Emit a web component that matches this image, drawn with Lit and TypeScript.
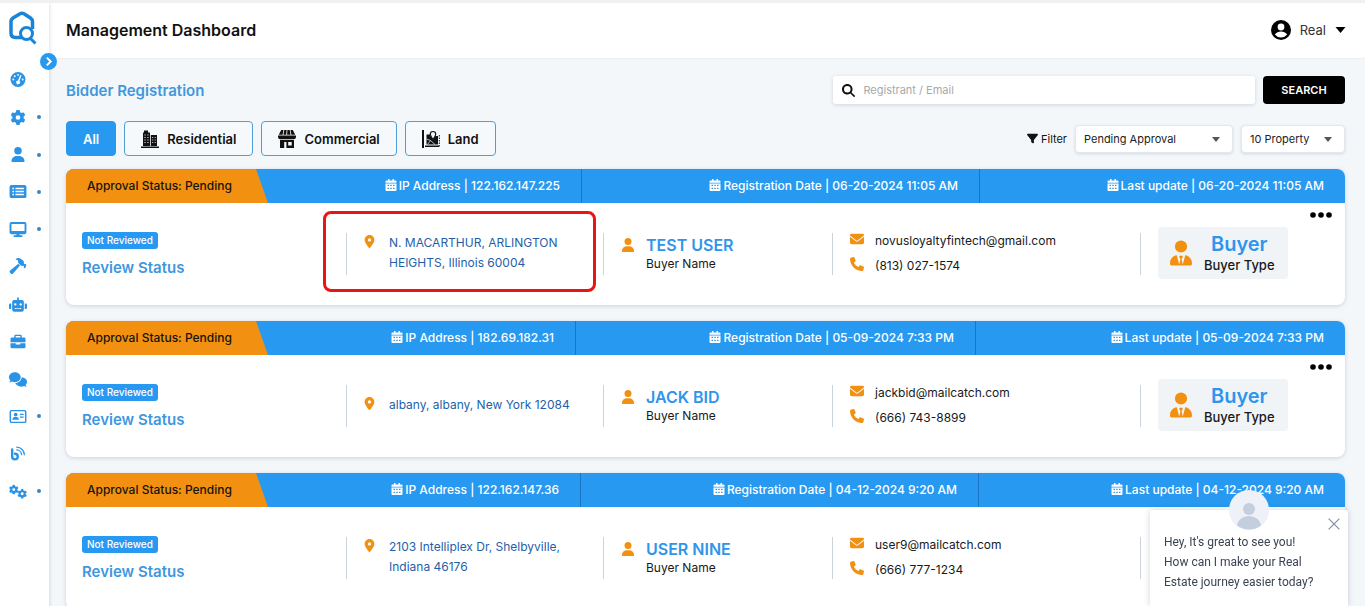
import { LitElement, html, css, svg, TemplateResult } from "lit";
import { customElement, property, state } from "lit/decorators.js";
import { styleMap } from "lit/directives/style-map.js";
import { classMap } from "lit/directives/class-map.js";

const GEAR =
  "M495.9 166.6c3.2 8.7 .5 18.4-6.4 24.6l-43.3 39.4c1.1 8.3 1.7 16.8 1.7 25.4s-.6 17.1-1.7 25.4l43.3 39.4c6.9 6.2 9.6 15.9 6.4 24.6c-4.4 11.9-9.7 23.3-15.8 34.3l-4.7 8.1c-6.6 11-14 21.4-22.1 31.2c-5.9 7.2-15.7 9.6-24.5 6.8l-55.7-17.7c-13.4 10.3-28.2 18.9-44 25.4l-12.5 57.1c-2 9.1-9 16.3-18.2 17.8c-13.8 2.3-28 3.5-42.5 3.5s-28.7-1.2-42.5-3.5c-9.2-1.5-16.2-8.7-18.2-17.8l-12.5-57.1c-15.8-6.5-30.6-15.1-44-25.4L83.1 425.9c-8.8 2.8-18.6 .3-24.5-6.8c-8.1-9.8-15.5-20.2-22.1-31.2l-4.7-8.1c-6.1-11-11.4-22.4-15.8-34.3c-3.2-8.7-.5-18.4 6.4-24.6l43.3-39.4C64.6 273.1 64 264.6 64 256s.6-17.1 1.7-25.4L22.4 191.2c-6.9-6.2-9.6-15.9-6.4-24.6c4.4-11.9 9.7-23.3 15.8-34.3l4.7-8.1c6.6-11 14-21.4 22.1-31.2c5.9-7.2 15.7-9.6 24.5-6.8l55.7 17.7c13.4-10.3 28.2-18.9 44-25.4l12.5-57.1c2-9.1 9-16.3 18.2-17.8C227.3 1.2 241.5 0 256 0s28.7 1.2 42.5 3.5c9.2 1.5 16.2 8.7 18.2 17.8l12.5 57.1c15.8 6.5 30.6 15.1 44 25.4l55.7-17.7c8.8-2.8 18.6-.3 24.5 6.8c8.1 9.8 15.5 20.2 22.1 31.2l4.7 8.1c6.1 11 11.4 22.4 15.8 34.3zM256 336a80 80 0 1 0 0-160 80 80 0 1 0 0 160z";

interface Glyph {
  box: string;
  art: TemplateResult;
}

const glyphs: Record<string, Glyph> = {
  gauge: {
    box: "0 0 512 512",
    art: svg`<path fill-rule="evenodd" d="M256 0a256 256 0 1 1 0 512 256 256 0 1 1 0-512zM256 64a32 32 0 1 0 0 64 32 32 0 1 0 0-64zM144 112a32 32 0 1 0 0 64 32 32 0 1 0 0-64zM96 224a32 32 0 1 0 0 64 32 32 0 1 0 0-64zM416 224a32 32 0 1 0 0 64 32 32 0 1 0 0-64zM325 118l-66 172a64 64 0 1 0 45 17l66-172a24 24 0 0 0-45-17z"/>`,
  },
  gear: { box: "0 0 512 512", art: svg`<path d=${GEAR} />` },
  gears: {
    box: "0 0 640 512",
    art: svg`<g transform="translate(0 20) scale(.66)"><path d=${GEAR} /></g><g transform="translate(300 170) scale(.66)"><path d=${GEAR} /></g>`,
  },
  user: {
    box: "0 0 448 512",
    art: svg`<path d="M224 256a128 128 0 1 0 0-256 128 128 0 1 0 0 256zm-45.7 48C79.8 304 0 383.8 0 482.3 0 498.7 13.3 512 29.7 512h388.6c16.4 0 29.7-13.3 29.7-29.7C448 383.8 368.2 304 269.7 304h-91.4z"/>`,
  },
  list: {
    box: "0 0 576 512",
    art: svg`<path fill-rule="evenodd" d="M64 32h448a64 64 0 0 1 64 64v320a64 64 0 0 1-64 64H64a64 64 0 0 1-64-64V96a64 64 0 0 1 64-64zM96 128v52h56v-52zM96 230v52h56v-52zM96 332v52h56v-52zM200 132v44h288v-44zM200 234v44h288v-44zM200 336v44h288v-44z"/>`,
  },
  desktop: {
    box: "0 0 576 512",
    art: svg`<path d="M64 0C28.7 0 0 28.7 0 64L0 352c0 35.3 28.7 64 64 64l176 0-10.7 32L160 448c-17.7 0-32 14.3-32 32s14.3 32 32 32l256 0c17.7 0 32-14.3 32-32s-14.3-32-32-32l-69.3 0L336 416l176 0c35.3 0 64-28.7 64-64l0-288c0-35.3-28.7-64-64-64L64 0zM512 64l0 240L64 304 64 64l448 0z"/>`,
  },
  hammer: {
    box: "0 0 576 512",
    art: svg`<path d="M571 194l-23-23a16 16 0 0 0-22 0l-12 11-28-28c11-34 3-73-24-99L401 5c-56-56-146-56-202 0l90 45v40c0 25 10 49 28 67l57 53c26 26 64 34 98 23l29 29-12 11a16 16 0 0 0 0 23l23 23a16 16 0 0 0 22 0l38-103a16 16 0 0 0-1-22z"/><path d="M300 160L20 392c-25 23-26 53-2 77l25 25c24 24 53 23 77-2l235-273z"/>`,
  },
  robot: {
    box: "0 0 640 512",
    art: svg`<path fill-rule="evenodd" d="M320 0a32 32 0 0 1 32 32v64h104a72 72 0 0 1 72 72v272a72 72 0 0 1-72 72H184a72 72 0 0 1-72-72V168a72 72 0 0 1 72-72h104V32a32 32 0 0 1 32-32zM208 384v32h64v-32zM296 384v32h48v-32zM368 384v32h64v-32zM224 208a42 42 0 1 0 0 84 42 42 0 1 0 0-84zM416 208a42 42 0 1 0 0 84 42 42 0 1 0 0-84zM48 224h32v192H48a48 48 0 0 1-48-48v-96a48 48 0 0 1 48-48zM592 224h-32v192h32a48 48 0 0 0 48-48v-96a48 48 0 0 0-48-48z"/>`,
  },
  briefcase: {
    box: "0 0 512 512",
    art: svg`<path fill-rule="evenodd" d="M176 24h160a48 48 0 0 1 48 48v48h80a48 48 0 0 1 48 48v112H0V168a48 48 0 0 1 48-48h80V72a48 48 0 0 1 48-48zM176 72v48h160V72zM0 316h180v40h152v-40h180v126a48 48 0 0 1-48 48H48a48 48 0 0 1-48-48z"/>`,
  },
  comments: {
    box: "0 0 640 512",
    art: svg`<path d="M416 176c0 97-93 176-208 176-38 0-74-9-105-24-29 21-62 30-95 30 22-25 36-50 40-72C18 256 0 218 0 176 0 79 93 0 208 0s208 79 208 176z"/><path d="M448 178c0 114-104 202-226 206 38 76 118 128 210 128 38 0 74-9 105-24 29 17 62 24 95 24-20-24-36-45-40-67 30-30 48-69 48-109 0-82-80-154-193-160z"/>`,
  },
  card: {
    box: "0 0 576 512",
    art: svg`<path fill-rule="evenodd" d="M64 32h448a64 64 0 0 1 64 64v320a64 64 0 0 1-64 64H64a64 64 0 0 1-64-64V96a64 64 0 0 1 64-64zM48 96v320a16 16 0 0 0 16 16h448a16 16 0 0 0 16-16V96a16 16 0 0 0-16-16H64a16 16 0 0 0-16 16z"/><circle cx="208" cy="190" r="64"/><path d="M96 368c0-52 36-92 84-92h56c48 0 84 40 84 92zM352 160h128v44H352zM352 256h128v44H352z"/>`,
  },
  blog: {
    box: "0 0 512 512",
    art: svg`<path fill="none" stroke="currentColor" stroke-width="80" stroke-linecap="round" d="M56 120v240a96 96 0 1 0 96-96"/><path fill="none" stroke="currentColor" stroke-width="44" stroke-linecap="round" d="M216 40c140 4 252 116 256 256M216 134c88 4 158 74 162 162"/>`,
  },
  search: {
    box: "0 0 512 512",
    art: svg`<path d="M416 208c0 45.9-14.9 88.3-40 122.7L502.6 457.4c12.5 12.5 12.5 32.8 0 45.3s-32.8 12.5-45.3 0L330.7 376c-34.4 25.2-76.8 40-122.7 40C93.1 416 0 322.9 0 208S93.1 0 208 0S416 93.1 416 208zM208 336a128 128 0 1 0 0-256 128 128 0 1 0 0 256z"/>`,
  },
  filter: {
    box: "0 0 512 512",
    art: svg`<path d="M3.9 54.9C10.5 40.9 24.5 32 40 32l432 0c15.5 0 29.5 8.9 36.1 22.9s4.6 30.5-5.2 42.5L320 320.9 320 448c0 12.1-6.8 23.2-17.7 28.6s-23.8 4.3-33.5-3l-64-48c-8.1-6-12.8-15.5-12.8-25.6l0-79.1L9 97.3C-.7 85.4-2.8 68.8 3.9 54.9z"/>`,
  },
  pin: {
    box: "0 0 384 512",
    art: svg`<path d="M215.7 499.2C267 435 384 279.4 384 192C384 86 298 0 192 0S0 86 0 192c0 87.4 117 243 168.3 307.2c12.3 15.3 35.1 15.3 47.4 0zM192 128a64 64 0 1 1 0 128 64 64 0 1 1 0-128z"/>`,
  },
  envelope: {
    box: "0 0 512 512",
    art: svg`<path d="M48 64C21.5 64 0 85.5 0 112c0 15.1 7.1 29.3 19.2 38.4L236.8 313.6c11.4 8.5 27 8.5 38.4 0L492.8 150.4c12.1-9.1 19.2-23.3 19.2-38.4c0-26.5-21.5-48-48-48L48 64zM0 176L0 384c0 35.3 28.7 64 64 64l384 0c35.3 0 64-28.7 64-64l0-208L294.4 339.2c-22.8 17.1-54 17.1-76.8 0L0 176z"/>`,
  },
  phone: {
    box: "0 0 512 512",
    art: svg`<path d="M164.9 24.6c-7.7-18.6-28-28.5-47.4-23.2l-88 24C12.1 30.2 0 46 0 64C0 311.4 200.6 512 448 512c18 0 33.8-12.1 38.6-29.5l24-88c5.3-19.4-4.6-39.7-23.2-47.4l-96-40c-16.3-6.8-35.2-2.1-46.3 11.6L304.7 368C234.3 334.7 177.3 277.7 144 207.3L193.3 167c13.7-11.2 18.4-30 11.6-46.3l-40-96z"/>`,
  },
  calendar: {
    box: "0 0 24 24",
    art: svg`<path fill-rule="evenodd" d="M6 0h3v3h6V0h3v3h3a2 2 0 0 1 2 2v2.500H1V5a2 2 0 0 1 2-2h3zM1 9h22v13a2 2 0 0 1-2 2H3a2 2 0 0 1-2-2zM5 11.500v2.500h3v-2.500zM10.500 11.500v2.500h3v-2.500zM16 11.500v2.500h3v-2.500zM5 17.500v2.500h3v-2.500zM10.500 17.500v2.500h3v-2.500zM16 17.500v2.500h3v-2.500z"/>`,
  },
  tie: {
    box: "0 0 448 512",
    art: svg`<circle cx="224" cy="124" r="124"/><path d="M138 302C58 312 0 380 0 460v22c0 17 13 30 30 30h388c17 0 30-13 30-30v-22c0-80-58-148-138-158l-50 186-24-104 24-46c6-11-2-24-14-24h-44c-12 0-20 13-14 24l24 46-24 104z"/>`,
  },
  account: {
    box: "0 0 20 20",
    art: svg`<circle cx="10" cy="10" r="10"/><circle cx="10" cy="7" r="3.400" fill="#fff"/><path fill="#fff" d="M3.800 14.600c1.500-2 3.600-3.200 6.200-3.200s4.700 1.200 6.200 3.200A8 8 0 0 1 10 17.600a8 8 0 0 1-6.200-3z"/>`,
  },
  caret: { box: "0 0 10 6", art: svg`<path d="M0 0h10L5 6z"/>` },
  chevron: {
    box: "0 0 10 10",
    art: svg`<path d="M3.500 1.500L7 5 3.500 8.500" fill="none" stroke="currentColor" stroke-width="1.800"/>`,
  },
  close: {
    box: "0 0 10 10",
    art: svg`<path d="M.5.5l9 9M9.500.5l-9 9" fill="none" stroke="currentColor" stroke-width="1"/>`,
  },
  dots: {
    box: "0 0 22 6",
    art: svg`<circle cx="3" cy="3" r="2.800"/><circle cx="11" cy="3" r="2.800"/><circle cx="19" cy="3" r="2.800"/>`,
  },
  person: {
    box: "0 0 40 40",
    art: svg`<circle cx="20" cy="20" r="20" fill="#eef2f8"/><circle cx="20" cy="19" r="6" fill="#c5cede"/><path fill="#c5cede" d="M8 35.500c1-6 6-9.500 12-9.500s11 3.500 12 9.500a20 20 0 0 1-24 0z"/>`,
  },
  buildings: {
    box: "0 0 18 18",
    art: svg`<path d="M2 2.500h1V.5h4v2h2V16H2zM9.800 5H16v11H9.800zM0 16.500h18V18H0z"/><path stroke="#f4f7fa" stroke-width=".7" d="M3.300 5h1.500M6.200 5h1.500M3.300 7.500h1.500M6.200 7.500h1.500M3.300 10h1.500M6.200 10h1.500M3.300 12.500h1.500M6.200 12.500h1.500M11 7.500h1.300M13.600 7.500h1.300M11 10h1.300M13.600 10h1.300M11 12.500h1.300M13.600 12.500h1.300"/>`,
  },
  store: {
    box: "0 0 18 18",
    art: svg`<path d="M3.200 0h2.300L4.600 4.700H.8zM6.300 0h2.300l-.3 4.700H5.400zM9.400 0h2.300l.9 4.700H9.100zM12.500 0h2.300l2.400 4.700h-3.800zM0 5.500h18v1.700a2.300 2.300 0 0 1-2.300 2H2.300A2.300 2.300 0 0 1 0 7.200z"/><path fill-rule="evenodd" d="M2 10h14v8H2zM6.200 12v6h2.200v-6zM10.200 12v3.500h3.500V12z"/>`,
  },
  land: {
    box: "0 0 18 18",
    art: svg`<path d="M0 0h2v18H0zM3 15.500h14V17H3zM4.500 4.500h4.200l2.300 5 2-3.500h3V14.500H4.500z"/><circle cx="11" cy="4" r="3" fill="#f4f7fa"/><path fill="#f4f7fa" stroke="currentColor" stroke-width="1.200" d="M11 9.500C9.300 7.300 8.300 5.700 8.300 4.200a2.700 2.700 0 0 1 5.400 0c0 1.500-1 3.100-2.700 5.300z"/><path fill="none" stroke="#f4f7fa" stroke-width=".7" d="M4.500 9l4 1.500L5.500 14.500M8.500 10.500L13 14.500"/><path fill="none" stroke="currentColor" stroke-dasharray="1.500 1" d="M17.300 5v11.500"/>`,
  },
};

@customElement("ui-icon")
export class UiIcon extends LitElement {
  static styles = css`
    :host {
      display: inline-flex;
      flex: none;
      width: 14px;
      height: 14px;
    }
    .art {
      width: 100%;
      height: 100%;
      fill: currentColor;
      display: block;
      overflow: visible;
    }
  `;
  @property() name = "";
  render() {
    const g = glyphs[this.name];
    return html`<svg class="art" viewBox=${g.box} aria-hidden="true">${g.art}</svg>`;
  }
}

interface Bidder {
  ip: string;
  registered: string;
  updated: string;
  address: string;
  name: string;
  email: string;
  phone: string;
  type?: string;
  marked?: boolean;
  columns: number[];
}

const bidders: Bidder[] = [
  {
    ip: "122.162.147.225",
    registered: "06-20-2024 11:05 AM",
    updated: "06-20-2024 11:05 AM",
    address: "N. MACARTHUR, ARLINGTON HEIGHTS, Illinois 60004",
    name: "TEST USER",
    email: "novusloyaltyfintech@gmail.com",
    phone: "(813) 027-1574",
    type: "Buyer",
    marked: true,
    columns: [516, 398, 365],
  },
  {
    ip: "182.69.182.31",
    registered: "05-09-2024 7:33 PM",
    updated: "05-09-2024 7:33 PM",
    address: "albany, albany, New York 12084",
    name: "JACK BID",
    email: "jackbid@mailcatch.com",
    phone: "(666) 743-8899",
    type: "Buyer",
    columns: [510, 400, 369],
  },
  {
    ip: "122.162.147.36",
    registered: "04-12-2024 9:20 AM",
    updated: "04-12-2024 9:20 AM",
    address: "2103 Intelliplex Dr, Shelbyville, Indiana 46176",
    name: "USER NINE",
    email: "user9@mailcatch.com",
    phone: "(666) 777-1234",
    columns: [515, 398, 366],
  },
];

@customElement("bidder-card")
export class BidderCard extends LitElement {
  static styles = css`
    :host {
      display: block;
    }
    .card {
      background: #fff;
      border-radius: 8px;
      box-shadow: 0 1px 4px rgba(60, 80, 110, 0.22);
      position: relative;
    }
    .head {
      display: grid;
      height: 34px;
      overflow: hidden;
      border-radius: 8px 8px 0 0;
      background: #2799f1;
      color: #fff;
      font-size: 12px;
      font-weight: 500;
    }
    .slot {
      display: flex;
      align-items: center;
      justify-content: flex-end;
      padding-right: 21px;
      border-right: 1px solid #1a76c4;
      white-space: nowrap;
    }
    .slot:last-child {
      border-right: 0;
    }
    .first {
      justify-content: space-between;
    }
    .status {
      align-self: stretch;
      display: flex;
      align-items: center;
      width: 202px;
      box-sizing: border-box;
      padding: 0 0 2px 21px;
      background: #f29111;
      color: #16130d;
      clip-path: polygon(0 0, 190px 0, 100% 100%, 0 100%);
    }
    .fact {
      display: flex;
      align-items: center;
      gap: 2px;
      padding-bottom: 2px;
    }
    .fact ui-icon {
      width: 12px;
      height: 12px;
    }
    .body {
      display: grid;
      grid-template-columns: 280fr 257fr 229fr 308fr 205fr;
      align-items: center;
      height: 102px;
    }
    .cell {
      position: relative;
      display: flex;
      align-items: center;
      box-sizing: border-box;
      height: 42px;
      padding: 0 0 2px 17px;
      border-left: 1px solid #c9d4de;
      font-size: 12px;
      color: #17191c;
    }
    .review {
      flex-direction: column;
      align-items: flex-start;
      justify-content: center;
      gap: 9px;
      padding: 2px 0 0 16px;
      border-left: 0;
    }
    .badge {
      padding: 0 5px;
      border-radius: 3px;
      background: #2799f1;
      color: #fff;
      font-size: 10px;
      font-weight: 500;
      line-height: 17px;
    }
    .review-title {
      margin: 0;
      color: #3f97dd;
      font-size: 15px;
      font-weight: 600;
      line-height: 20px;
    }
    .place {
      display: flex;
      gap: 14px;
    }
    .place ui-icon {
      width: 11px;
      height: 13px;
      margin-top: 2px;
    }
    .address {
      color: #1f5fa9;
      font-size: 12px;
      line-height: 20px;
      text-decoration: none;
      max-width: 190px;
    }
    ui-icon {
      color: #f29111;
    }
    .fact ui-icon {
      color: #fff;
    }
    .buyer {
      display: flex;
      gap: 11px;
    }
    .buyer ui-icon {
      margin-top: 3px;
    }
    .name {
      margin: 0;
      color: #2f95ea;
      font-size: 16px;
      font-weight: 600;
      line-height: 20px;
    }
    .caption {
      margin: 0;
      font-size: 12px;
      line-height: 17px;
    }
    .contact {
      display: grid;
      grid-template-columns: 14px auto;
      align-items: center;
      column-gap: 11px;
      line-height: 25px;
    }
    .contact ui-icon {
      margin-bottom: 3px;
    }
    .type {
      display: flex;
      align-items: center;
      gap: 12px;
      padding: 5px 13px 5px 12px;
      border-radius: 4px;
      background: #f1f4f7;
      text-align: center;
    }
    .type ui-icon {
      width: 22px;
      height: 26px;
    }
    .type .name {
      font-size: 20px;
      line-height: 24px;
    }
    .type .caption {
      font-size: 13px;
      font-weight: 500;
      line-height: 18px;
    }
    .more {
      position: absolute;
      top: 40px;
      right: 12px;
      padding: 3px 1px;
      border: 0;
      background: none;
      display: flex;
      cursor: pointer;
    }
    .more ui-icon {
      width: 22px;
      height: 6px;
      color: #000;
    }
    .mark {
      position: absolute;
      inset: -22px 7px -17px -24px;
      border: 3px solid #ec1313;
      border-radius: 8px;
      pointer-events: none;
    }
  `;
  @property({ attribute: false }) bidder!: Bidder;

  private fact(label: string, value: string) {
    return html`<span class="fact"><ui-icon name="calendar"></ui-icon>${label} | ${value}</span>`;
  }

  render() {
    const b = this.bidder;
    const grid = { gridTemplateColumns: b.columns.map((c) => `${c}fr`).join(" ") };
    return html`
      <article class="card">
        <header class="head" style=${styleMap(grid)}>
          <div class="slot first">
            <span class="status">Approval Status: Pending</span>
            ${this.fact("IP Address", b.ip)}
          </div>
          <div class="slot">${this.fact("Registration Date", b.registered)}</div>
          <div class="slot">${this.fact("Last update", b.updated)}</div>
        </header>
        <div class="body">
          <div class="cell review">
            <span class="badge">Not Reviewed</span>
            <h3 class="review-title">Review Status</h3>
          </div>
          <div class="cell">
            <div class="place">
              <ui-icon name="pin"></ui-icon>
              <a class="address" href="#property">${b.address}</a>
            </div>
            ${b.marked ? html`<span class="mark"></span>` : ""}
          </div>
          <div class="cell">
            <div class="buyer">
              <ui-icon name="user"></ui-icon>
              <div>
                <h3 class="name">${b.name}</h3>
                <p class="caption">Buyer Name</p>
              </div>
            </div>
          </div>
          <div class="cell">
            <div class="contact">
              <ui-icon name="envelope"></ui-icon><span>${b.email}</span>
              <ui-icon name="phone"></ui-icon><span>${b.phone}</span>
            </div>
          </div>
          <div class="cell">
            ${b.type
              ? html`<div class="type">
                  <ui-icon name="tie"></ui-icon>
                  <div>
                    <p class="name">${b.type}</p>
                    <p class="caption">Buyer Type</p>
                  </div>
                </div>`
              : ""}
          </div>
        </div>
        <button class="more" aria-label="More actions"><ui-icon name="dots"></ui-icon></button>
      </article>
    `;
  }
}

const menu: { icon: string; label: string; sub?: boolean }[] = [
  { icon: "gauge", label: "Dashboard" },
  { icon: "gear", label: "Settings", sub: true },
  { icon: "user", label: "Users", sub: true },
  { icon: "list", label: "Listings", sub: true },
  { icon: "desktop", label: "Website", sub: true },
  { icon: "hammer", label: "Auctions" },
  { icon: "robot", label: "Bots" },
  { icon: "briefcase", label: "Business" },
  { icon: "comments", label: "Messages" },
  { icon: "card", label: "Contacts", sub: true },
  { icon: "blog", label: "Blog" },
  { icon: "gears", label: "Advanced", sub: true },
];

const tabs = [
  { label: "All", icon: "" },
  { label: "Residential", icon: "buildings" },
  { label: "Commercial", icon: "store" },
  { label: "Land", icon: "land" },
];

@customElement("app-root")
export class AppRoot extends LitElement {
  static styles = css`
    :host {
      display: block;
      height: 100vh;
      overflow: hidden;
      box-sizing: border-box;
      border-top: 3px solid #eff0f2;
      background: #f4f7fa;
      font-family: Inter, "Noto Sans", sans-serif;
      color: #111;
    }
    button,
    input,
    select {
      font-family: inherit;
    }
    .shell {
      display: grid;
      grid-template-columns: 49px minmax(0, 1fr);
      height: 100%;
    }
    .side {
      position: relative;
      z-index: 2;
      background: #fff;
      box-shadow: 1px 0 3px rgba(60, 80, 110, 0.16);
    }
    .logo {
      display: block;
      height: 38px;
      padding: 7px 0 13px 8px;
    }
    .logo-art {
      width: 30px;
      height: 36px;
      display: block;
    }
    .menu {
      display: grid;
      grid-auto-rows: 1fr;
      height: 449px;
      margin: 0;
      padding: 0;
      list-style: none;
    }
    .menu-link {
      display: flex;
      align-items: center;
      height: 100%;
      padding: 0 8px 0 9px;
      color: #2b93e6;
    }
    .menu-link ui-icon {
      width: 18px;
      height: 15px;
    }
    .menu-link.sub::after {
      content: "";
      width: 4px;
      height: 4px;
      margin-left: auto;
      border-radius: 50%;
      background: #3a86c4;
    }
    .toggle {
      position: absolute;
      top: 50px;
      right: -8px;
      display: flex;
      align-items: center;
      justify-content: center;
      width: 17px;
      height: 17px;
      padding: 0;
      border: 0;
      border-radius: 50%;
      background: #2799f1;
      color: #fff;
    }
    .toggle ui-icon {
      width: 11px;
      height: 11px;
    }
    .top {
      display: flex;
      align-items: center;
      justify-content: space-between;
      box-sizing: border-box;
      height: 56px;
      padding: 0 19px 2px 17px;
      background: #fff;
      border-bottom: 1px solid #eceef0;
    }
    .title {
      margin: 0;
      font-size: 16px;
      font-weight: 600;
    }
    .account {
      display: flex;
      align-items: center;
      gap: 9px;
      padding: 0;
      border: 0;
      background: none;
      color: #333;
      font-size: 13px;
    }
    .account ui-icon {
      width: 20px;
      height: 20px;
      color: #000;
    }
    .account .caret {
      width: 11px;
      height: 6px;
    }
    .main {
      padding: 17px 20px 0 17px;
    }
    .bar {
      display: flex;
      align-items: center;
      justify-content: space-between;
    }
    .section {
      margin: 0;
      color: #3f97dd;
      font-size: 15px;
      font-weight: 600;
    }
    .search {
      display: flex;
      gap: 8px;
      width: 40%;
    }
    .field {
      flex: 1;
      display: flex;
      align-items: center;
      gap: 8px;
      height: 28px;
      padding-left: 9px;
      border-radius: 3px;
      background: #fff;
      box-shadow: 0 1px 4px rgba(60, 80, 110, 0.2);
    }
    .field ui-icon {
      width: 13px;
      height: 13px;
    }
    .input {
      flex: 1;
      min-width: 0;
      padding: 0;
      border: 0;
      outline: 0;
      background: none;
      font-size: 11px;
    }
    .input::placeholder {
      color: #a9a9a9;
    }
    .go {
      width: 82px;
      border: 0;
      border-radius: 4px;
      background: #000;
      color: #fff;
      font-size: 11px;
      font-weight: 600;
    }
    .tools {
      margin: 17px 0 13px;
    }
    .tabs {
      display: flex;
      gap: 8px;
    }
    .tab {
      display: flex;
      align-items: center;
      gap: 8px;
      height: 35px;
      padding: 0 16px;
      border: 1px solid #4f9fd4;
      border-radius: 4px;
      background: #f6f9fb;
      color: #111;
      font-size: 13px;
      font-weight: 600;
    }
    .tab.on {
      border-color: #2799f1;
      background: #2799f1;
      color: #fff;
    }
    .tab ui-icon {
      width: 18px;
      height: 18px;
    }
    .filters {
      display: flex;
      align-items: center;
      gap: 8px;
      font-size: 11px;
    }
    .filter-label {
      display: flex;
      align-items: center;
      gap: 3px;
    }
    .filter-label ui-icon {
      width: 11px;
      height: 11px;
    }
    .pick {
      position: relative;
      display: flex;
      width: 158px;
    }
    .pick.small {
      width: 104px;
    }
    .select {
      appearance: none;
      width: 100%;
      height: 28px;
      padding: 0 8px;
      border: 1px solid #e3e8ec;
      border-radius: 4px;
      background: #fff;
      box-shadow: 0 1px 3px rgba(60, 80, 110, 0.18);
      color: #222;
      font-size: 11px;
    }
    .pick ui-icon {
      position: absolute;
      top: 12px;
      right: 13px;
      width: 8px;
      height: 5px;
      color: #555;
      pointer-events: none;
    }
    .list {
      display: grid;
      gap: 16px;
    }
    .chat {
      position: fixed;
      z-index: 3;
      right: 17px;
      bottom: 0;
      box-sizing: border-box;
      width: 198px;
      height: 96px;
      padding: 22px 14px 0;
      border-radius: 2px 2px 0 0;
      background: #fff;
      box-shadow: 0 0 6px rgba(40, 60, 90, 0.22);
      color: #3a4452;
      font-family: Roboto, sans-serif;
      font-size: 12px;
      line-height: 20px;
    }
    .chat-text {
      margin: 0;
    }
    .chat .face {
      position: absolute;
      top: -20px;
      left: 79px;
      width: 40px;
      height: 40px;
    }
    .chat-close {
      position: absolute;
      top: 8px;
      right: 8px;
      display: flex;
      padding: 0;
      border: 0;
      background: none;
      color: #8391a5;
    }
    .chat-close ui-icon {
      width: 12px;
      height: 12px;
    }
  `;

  @state() private active = "All";

  render() {
    return html`
      <div class="shell">
        <aside class="side">
          <a class="logo" href="#home" aria-label="Home">
            <svg class="logo-art" viewBox="0 0 30 36" fill="none" aria-hidden="true">
              <path
                d="M14 27.500H7.500Q3 27.500 3 23V11.500Q3 9.500 5 8L12 3.800Q14 2.800 16 3.800L22.500 8Q24.500 9.500 24.500 11.500V19"
                stroke="#1b84d6"
                stroke-width="3.500"
              />
              <circle cx="18.500" cy="23.500" r="6" stroke="#1b84d6" stroke-width="3" />
              <path d="M22.500 28.500L27.500 33.500" stroke="#1b84d6" stroke-width="3" />
            </svg>
          </a>
          <ul class="menu">
            ${menu.map(
              (m) => html`<li>
                <a class=${classMap({ "menu-link": true, sub: !!m.sub })} href="#menu" aria-label=${m.label}>
                  <ui-icon name=${m.icon}></ui-icon>
                </a>
              </li>`
            )}
          </ul>
          <button class="toggle" aria-label="Expand menu"><ui-icon name="chevron"></ui-icon></button>
        </aside>
        <div>
          <header class="top">
            <h1 class="title">Management Dashboard</h1>
            <button class="account">
              <ui-icon name="account"></ui-icon>Real<ui-icon class="caret" name="caret"></ui-icon>
            </button>
          </header>
          <main class="main">
            <div class="bar">
              <h2 class="section">Bidder Registration</h2>
              <form class="search" @submit=${(e: Event) => e.preventDefault()}>
                <label class="field">
                  <ui-icon name="search"></ui-icon>
                  <input class="input" type="text" placeholder="Registrant / Email" aria-label="Registrant / Email" />
                </label>
                <button class="go">SEARCH</button>
              </form>
            </div>
            <div class="bar tools">
              <div class="tabs">
                ${tabs.map(
                  (t) => html`<button
                    class=${classMap({ tab: true, on: t.label === this.active })}
                    @click=${() => (this.active = t.label)}
                  >
                    ${t.icon ? html`<ui-icon name=${t.icon}></ui-icon>` : ""}${t.label}
                  </button>`
                )}
              </div>
              <div class="filters">
                <label class="filter-label" for="status"><ui-icon name="filter"></ui-icon>Filter</label>
                <div class="pick">
                  <select class="select" id="status"><option>Pending Approval</option></select>
                  <ui-icon name="caret"></ui-icon>
                </div>
                <div class="pick small">
                  <select class="select" aria-label="Items per page"><option>10 Property</option></select>
                  <ui-icon name="caret"></ui-icon>
                </div>
              </div>
            </div>
            <section class="list">
              ${bidders.map((b) => html`<bidder-card .bidder=${b}></bidder-card>`)}
            </section>
          </main>
        </div>
      </div>
      <aside class="chat">
        <ui-icon class="face" name="person"></ui-icon>
        <button class="chat-close" aria-label="Close chat"><ui-icon name="close"></ui-icon></button>
        <p class="chat-text">Hey, It's great to see you!<br />How can I make your Real<br />Estate journey easier today?</p>
      </aside>
    `;
  }
}
